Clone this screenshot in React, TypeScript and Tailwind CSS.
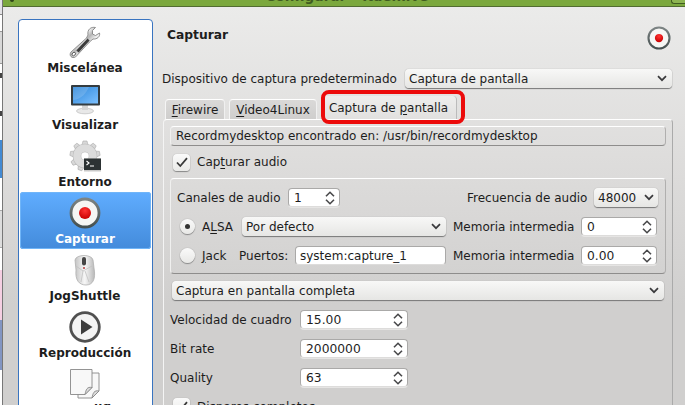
import React from "react";

type SpinProps = { value: string; className: string };

function Chevron() {
  return (
    <svg width="10" height="7" viewBox="0 0 10 7" className="shrink-0" fill="none" stroke="#3a3a3c" strokeWidth="1.7">
      <path d="M1 1.2 5 5.2 9 1.2" />
    </svg>
  );
}

function Spin({ value, className }: SpinProps) {
  return (
    <div className={"flex h-[19px] shrink-0 items-center justify-between rounded-[4px] border border-[#aaa9a8] border-b-[#dddcdb] bg-white pr-[4px] pl-[5px] text-[12.3px] shadow-[0_1px_0_#e6e5e4] " + className}>
      <span>{value}</span>
      <svg width="10" height="14" viewBox="0 0 10 14" fill="none" stroke="#48484a" strokeWidth="1.6">
        <path d="M1 5.3 5 1.3 9 5.3M1 8.7 5 12.7 9 8.7" />
      </svg>
    </div>
  );
}

function Combo({ value, className }: SpinProps) {
  return (
    <div className={"flex h-[19px] shrink-0 items-center justify-between rounded-[4px] bg-linear-to-b from-[#f8f8f7] to-[#e6e6e4] pl-[4px] whitespace-nowrap shadow-[0_1px_1px_#777,0_0_1px_#999] " + className}>
      <span>{value}</span>
      <Chevron />
    </div>
  );
}

function Check() {
  return (
    <div className="flex h-[17px] w-[17px] shrink-0 items-center justify-center rounded-[4px] bg-linear-to-b from-[#fafafa] to-[#eaeae8] shadow-[0_1px_1px_#888,0_0_1px_#999]">
      <svg width="12" height="11" viewBox="0 0 12 11" fill="none" stroke="#3a3a3a" strokeWidth="1.8">
        <path d="M1 5.5 4.3 9 11 1.2" />
      </svg>
    </div>
  );
}

function Radio({ on }: { on?: boolean }) {
  return (
    <div className="flex h-[15px] w-[15px] shrink-0 items-center justify-center rounded-full bg-linear-to-b from-[#fafafa] to-[#e8e8e6] shadow-[0_1px_1px_#888,0_0_1px_#888]">
      {on && <div className="h-[5px] w-[5px] rounded-full bg-[#333]" />}
    </div>
  );
}

function RecordIcon({ size, dot }: { size: number; dot: number }) {
  return (
    <svg width={size} height={size} viewBox="0 0 32 32" className="shrink-0">
      <defs>
        <linearGradient id="ring" x1="0" y1="0" x2="0" y2="1">
          <stop offset="0" stopColor="#7d8484" />
          <stop offset="1" stopColor="#455050" />
        </linearGradient>
        <radialGradient id="red" cx=".5" cy=".3" r=".7">
          <stop offset="0" stopColor="#ff3434" />
          <stop offset="1" stopColor="#c80000" />
        </radialGradient>
      </defs>
      <circle cx="16" cy="16" r="14" fill="#f6f6f4" stroke="url(#ring)" strokeWidth="2.800" />
      <circle cx="16" cy="16" r={dot} fill="url(#red)" />
    </svg>
  );
}

function WrenchIcon() {
  return (
    <svg width="32" height="32" viewBox="0 0 32 32">
      <defs>
        <linearGradient id="steel" x1=".35" y1=".35" x2=".6" y2=".6">
          <stop offset="0" stopColor="#f6f6f6" />
          <stop offset=".5" stopColor="#b5b5b5" />
          <stop offset="1" stopColor="#eeeeee" />
        </linearGradient>
      </defs>
      <path d="M26.500 1.500C22 .5 18 3.500 19 9L17.500 12 2 26C-.5 29.500 3 33 6.500 31L20.500 16 24 13C28 13.500 31.500 10.500 30.500 7L26.500 9.500 23.500 8 23.500 4.500Z" fill="url(#steel)" stroke="#7a7a7a" strokeWidth=".8" />
      <path d="M19.500 13.500 8.500 25.500" stroke="#3c3c3c" strokeWidth="3" />
      <path d="M17.500 13 7 23.500" stroke="#e5e5e5" strokeWidth=".8" />
      <ellipse cx="4.800" cy="28" rx="1.900" ry="1.500" fill="#fff" stroke="#555" strokeWidth=".9" transform="rotate(-45 4.800 28)" />
    </svg>
  );
}

function MonitorIcon() {
  return (
    <svg width="32" height="32" viewBox="0 0 32 32">
      <defs>
        <linearGradient id="screen" x1="0" y1="0" x2="1" y2="1">
          <stop offset="0" stopColor="#2d86d8" />
          <stop offset="1" stopColor="#7cc0ff" />
        </linearGradient>
      </defs>
      <ellipse cx="16" cy="28" rx="8.500" ry="2.800" fill="#e8e8e8" stroke="#bbb" strokeWidth=".7" />
      <path d="M13 21h6v6h-6z" fill="#d5d5d5" />
      <rect x="2" y="2" width="29" height="20.500" rx="1" fill="#343c40" />
      <rect x="4" y="4" width="25" height="16.500" fill="url(#screen)" />
      <path d="M4 17C13 16 17 10 20 4H4Z" fill="#fff" opacity=".15" />
    </svg>
  );
}

function GearIcon() {
  const teeth = [0, 40, 80, 120, 160, 200, 240, 280, 320];
  return (
    <svg width="32" height="32" viewBox="0 0 32 32">
      {teeth.map((a) => (
        <path key={a} d="M13 5 14 1h4l1 4z" fill="#d8d8d8" stroke="#aaa" strokeWidth=".6" transform={`rotate(${a} 16 16)`} />
      ))}
      <circle cx="16" cy="16" r="8" fill="none" stroke="#b5b5b5" strokeWidth="8.500" />
      <circle cx="16" cy="16" r="8" fill="none" stroke="#dcdcdc" strokeWidth="7.500" />
      <rect x="15" y="18.500" width="17" height="13" fill="#c9c9c9" />
      <rect x="15" y="18.500" width="17" height="11.500" fill="#2c3233" />
      <path d="M17.500 21 20 23 17.500 25M21 26h4" fill="none" stroke="#fff" strokeWidth="1.100" />
    </svg>
  );
}

function MouseIcon() {
  return (
    <svg width="32" height="32" viewBox="0 0 32 32">
      <defs>
        <linearGradient id="mouse" x1="0" y1="0" x2="1" y2="0">
          <stop offset="0" stopColor="#c4c4c4" />
          <stop offset=".5" stopColor="#f7f7f7" />
          <stop offset="1" stopColor="#b8b8b8" />
        </linearGradient>
      </defs>
      <path d="M6 6C7 0 23 0 24 6L25 14C27 25 24 31 17 31S6 26 7 16Z" fill="url(#mouse)" stroke="#b0b0b0" strokeWidth=".8" />
      <path d="M7 12 14 17 23 12M14 17 12 28M16 17 20 28" fill="none" stroke="#c2c2c2" strokeWidth=".8" />
      <rect x="13" y="3" width="4" height="8.500" rx="2" fill="#454545" />
      <circle cx="15" cy="14" r="1.100" fill="#b94a4a" />
    </svg>
  );
}

function PlayIcon() {
  return (
    <svg width="32" height="32" viewBox="0 0 32 32">
      <circle cx="16" cy="16" r="14.300" fill="#f3f3f3" stroke="#505050" strokeWidth="2.800" />
      <path d="M12 8.500 23.500 16 12 23.500Z" fill="#3c3c3c" />
    </svg>
  );
}

function PagesIcon() {
  return (
    <svg width="32" height="32" viewBox="0 0 32 32" fill="#f8f8f8" stroke="#888" strokeWidth=".9">
      <path d="M9 5h21v18l-7 7H9Z" />
      <path d="M30 23c-5-1-6 2-7 7Z" fill="#ddd" />
      <path d="M1.500 1.500h21.500v18l-7 7H1.500Z" />
      <path d="M23 19.500c-5-1-6 2-7 7Z" fill="#ddd" />
    </svg>
  );
}

const items = [
  { label: "Miscelánea", icon: <WrenchIcon /> },
  { label: "Visualizar", icon: <MonitorIcon /> },
  { label: "Entorno", icon: <GearIcon /> },
  { label: "Capturar", icon: <RecordIcon size={32} dot={6} />, active: true },
  { label: "JogShuttle", icon: <MouseIcon /> },
  { label: "Reproducción", icon: <PlayIcon /> },
  { label: "Transcodificar", icon: <PagesIcon /> },
];

const frame = "rounded-[4px] border border-t-white border-r-[#b0afae] border-b-[#8e8d8c] border-l-[#f0f0ef]";
const tab = "flex h-[20px] items-center justify-center rounded-t-[4px] border border-b-0 border-t-white border-r-[#f0f0f0] border-l-[#f5f5f5] bg-linear-to-b from-[#dad9d8] to-[#cfcecd]";

export default function App() {
  return (
    <div className="flex h-[405px] w-[685px] overflow-hidden bg-[#d0cfce] font-['DejaVu_Sans',sans-serif] text-[12px] leading-[16px] text-[#1d1d1d]">
      <div className="flex w-[3px] shrink-0 flex-col border-r border-[#777] bg-white">
        <div className="h-[15px] border-b border-[#888] bg-[#e4e3e6]" />
        <div className="h-[16px]" />
        <div className="h-[33px] border-y border-[#999] bg-[#d8d8d8]" />
        <div className="flex h-[76px] flex-col gap-[33px] pt-[9px]">
          <div className="h-[5px] w-[2px] bg-[#444]" />
          <div className="h-[5px] w-[2px] bg-[#444]" />
        </div>
        <div className="h-[38px] bg-[#438ad3]" />
        <div className="h-[32px]" />
        <div className="h-[38px] border-y border-[#aaa] bg-[#ddd]" />
        <div className="h-[22px]" />
        <div className="h-[50px] bg-[#f5cfe2]" />
        <div className="h-[50px] bg-[#8295c2]" />
      </div>
      <div className="flex min-w-0 flex-1 flex-col">
        <header className="flex h-[7px] shrink-0 items-start justify-between overflow-hidden border-b border-[#526c31] bg-[#7ba83d]">
          <div className="ml-[7px] h-[2px] w-[4px] rounded-b-full bg-[#2f4417]" />
          <div className="-mt-[12px] pl-[9px] text-[13.5px] font-bold whitespace-nowrap text-[#405b20]">Configurar – Kdenlive</div>
          <div className="h-[4px] w-[14px] rounded-bl-[3px] border-b border-l border-[#405b20] bg-[#8db551]" />
        </header>
        <div className="flex h-[398px] shrink-0 bg-linear-to-b from-[#ebebea] via-[#dddcdb] via-40% to-[#d0cfce] to-75%">
          <nav className="mt-[12px] ml-[15px] flex h-[420px] w-[135px] shrink-0 flex-col rounded-[4px] border border-[#3974c0] bg-white p-[1px]">
            {items.map((it) => (
              <div key={it.label} className={"flex h-[57px] shrink-0 flex-col items-center rounded-[3px] pt-[5px] pr-[1px] " + (it.active ? "bg-linear-to-b from-[#60adff] to-[#438bdb] text-white outline outline-offset-[-1px] outline-[#70b5f8]" : "")}>
                {it.icon}
                <span className="text-[12px] leading-[20px] font-bold">{it.label}</span>
              </div>
            ))}
          </nav>
          <main className="ml-[6px] flex w-[514px] shrink-0 flex-col">
            <div className="flex h-[62px] shrink-0 items-start justify-between pt-[19px] pr-[2px] pl-[8px]">
              <h1 className="pt-px text-[12.3px] font-bold">Capturar</h1>
              <RecordIcon size={24} dot={5.5} />
            </div>
            <div className="flex h-[19px] shrink-0 items-center pl-[3px]">
              <span className="w-[243px] whitespace-nowrap">Dispositivo de captura predeterminado</span>
              <Combo value="Captura de pantalla" className="w-[267px] pr-[5px]" />
            </div>
            <div className="mt-[8px] flex h-[23px] shrink-0 items-end gap-[4px] pl-[6px]">
              <div className={"w-[60px] " + tab}><span><u className="underline-offset-2">F</u>irewire</span></div>
              <div className={"w-[88px] " + tab}><span><u className="underline-offset-2">V</u>ideo4Linux</span></div>
              <div className="relative flex h-[23px] w-[136px] items-center justify-center rounded-t-[4px] border-r border-[#bbb] bg-linear-to-b from-[#eeeeed] to-[#e1e0df] whitespace-nowrap">
                <span>Captura de <u className="underline-offset-2">p</u>antalla</span>
                <div className="absolute -top-[6px] left-0 z-10 h-[34px] w-[144px] rounded-[8px] border-[4px] border-[#ec0b0b]" />
              </div>
            </div>
            <section className="ml-[4px] flex h-[300px] w-[510px] shrink-0 flex-col rounded-t-[4px] border border-t-white border-r-[#aaa] border-l-[#f4f4f4] pl-[7px]">
              <div className={"mt-[6px] -ml-px flex h-[20px] w-[496px] shrink-0 items-center pl-[5px] " + frame}>Recordmydesktop encontrado en: /usr/bin/recordmydesktop</div>
              <div className="flex h-[32px] shrink-0 items-center gap-[7px] pl-[2px]">
                <Check />
                <span>Cap<u className="underline-offset-2">t</u>urar audio</span>
              </div>
              <div className={"-ml-px flex h-[96px] w-[496px] shrink-0 flex-col pt-[4px] pl-[6px] " + frame}>
                <div className="flex h-[29px] items-center">
                  <span className="w-[111px] whitespace-nowrap">Canales de audio</span>
                  <Spin value="1" className="w-[52px]" />
                  <span className="ml-[127px] w-[127px] whitespace-nowrap">Frecuencia de audio</span>
                  <Combo value="48000" className="w-[64px] pr-[4px]" />
                </div>
                <div className="flex h-[29px] items-center">
                  <span className="w-[25px] pl-[3px]"><Radio on /></span>
                  <span className="w-[40px]">A<u className="underline-offset-2">L</u>SA</span>
                  <Combo value="Por defecto" className="w-[204px] pr-[5px]" />
                  <span className="ml-[7px] w-[128px] whitespace-nowrap">Memoria intermedia</span>
                  <Spin value="0" className="w-[76px]" />
                </div>
                <div className="flex h-[29px] items-center">
                  <span className="w-[25px] pl-[3px]"><Radio /></span>
                  <span className="w-[37px]"><u className="underline-offset-2">J</u>ack</span>
                  <span className="w-[56px]">Puertos:</span>
                  <div className="flex h-[19px] w-[151px] items-center rounded-[4px] border border-[#aaa9a8] border-b-[#dddcdb] bg-white pl-[4px]">system:capture_1</div>
                  <span className="ml-[7px] w-[128px] whitespace-nowrap">Memoria intermedia</span>
                  <Spin value="0.00" className="w-[76px]" />
                </div>
              </div>
              <Combo value="Captura en pantalla completa" className="mt-[7px] ml-px w-[492px] pr-[5px]" />
              <div className="mt-[5px] flex shrink-0 flex-col">
                {[["Velocidad de cuadro", "15.00"], ["Bit rate", "2000000"], ["Quality", "63"]].map(([label, value]) => (
                  <div key={label} className="flex h-[29px] items-center">
                    <span className="-ml-px w-[130px] whitespace-nowrap">{label}</span>
                    <Spin value={value} className="w-[108px]" />
                  </div>
                ))}
              </div>
              <div className="flex h-[29px] shrink-0 items-center gap-[7px] pl-[2px]">
                <Check />
                <span>Disparos completos</span>
              </div>
            </section>
          </main>
        </div>
      </div>
    </div>
  );
}
